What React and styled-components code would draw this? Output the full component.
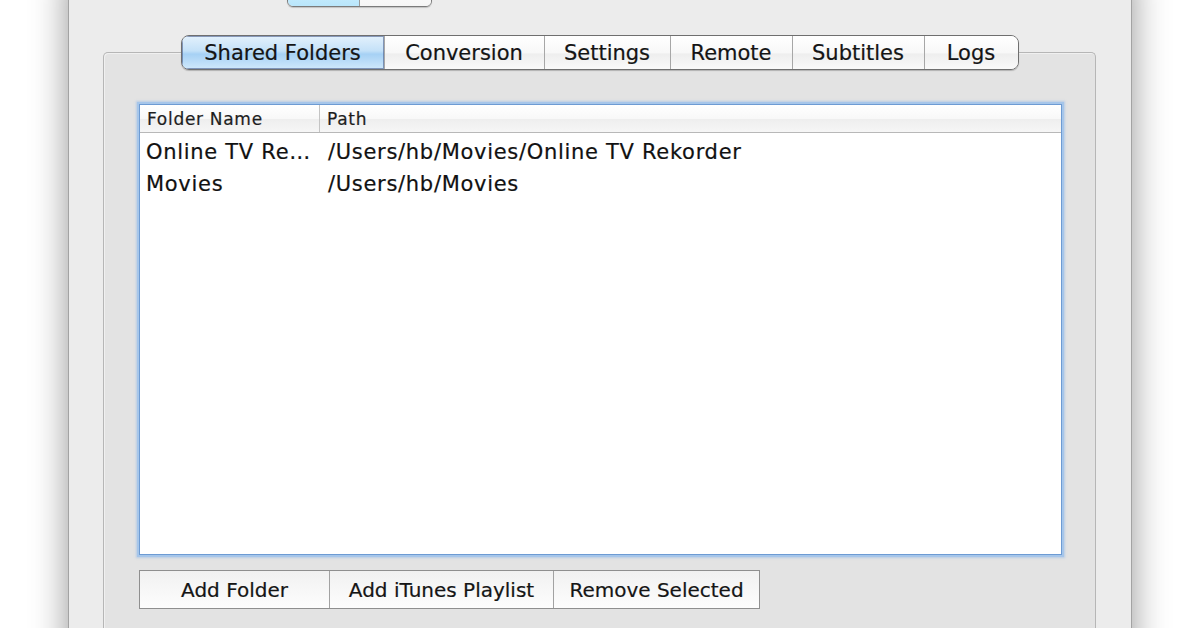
import React from "react";
import styled, { createGlobalStyle } from "styled-components";

const GlobalStyle = createGlobalStyle`
  html, body {
    margin: 0;
    padding: 0;
    background: #ffffff;
    overflow: hidden;
  }
  body {
    font-family: "DejaVu Sans", "Liberation Sans", sans-serif;
    color: #151515;
    -webkit-text-stroke: 0.2px currentColor;
  }
`;

const tabs = [
  { label: "Shared Folders", w: 202 },
  { label: "Conversion", w: 160 },
  { label: "Settings", w: 126 },
  { label: "Remote", w: 122 },
  { label: "Subtitles", w: 132 },
  { label: "Logs", w: 94 },
];

const folders = [
  { name: "Online TV Re\u2026", path: "/Users/hb/Movies/Online TV Rekorder" },
  { name: "Movies", path: "/Users/hb/Movies" },
];

const actions = [
  { label: "Add Folder", w: 189 },
  { label: "Add iTunes Playlist", w: 224 },
  { label: "Remove Selected", w: 206 },
];

const Page = styled.div`
  height: 628px;
  display: flex;
  justify-content: center;
  overflow: hidden;
`;

const Window = styled.div`
  box-sizing: border-box;
  width: 1064px;
  height: 720px;
  margin-top: -30px;
  background: #ececec;
  border-left: 1px solid #a3a3a3;
  border-right: 1px solid #a3a3a3;
  box-shadow: 0 0 34px rgba(0, 0, 0, 0.42);
  display: flex;
  flex-direction: column;
`;

const TopRow = styled.div`
  box-sizing: border-box;
  height: 37px;
  display: flex;
  align-items: flex-end;
  padding: 10px 0 0 12px;
`;

const TopLabel = styled.span`
  align-self: flex-start;
  width: 200px;
  margin: -4px 6px 0 0;
  line-height: 23px;
  text-align: right;
  font-size: 20px;
  color: #222;
`;

const Segmented = styled.div`
  display: flex;
  height: 27px;
  border: 1px solid #7b7b7b;
  border-radius: 6px;
  overflow: hidden;
  box-sizing: border-box;
  box-shadow: 0 1px 1px rgba(0, 0, 0, 0.18);
`;

const Segment = styled.div`
  width: ${(p) => p.$w}px;
  background: ${(p) =>
    p.$on ? "linear-gradient(#d6f2fe, #b9e6fb)" : "linear-gradient(#ffffff, #f6f6f6)"};
  & + & {
    border-left: 1px solid #9a9a9a;
  }
`;

const GroupWrap = styled.div`
  margin: 28px 35px 0 34px;
  display: flex;
  flex-direction: column;
`;

const TabBar = styled.div`
  display: flex;
  justify-content: center;
  position: relative;
  z-index: 1;
`;

const TabStrip = styled.div`
  display: flex;
  height: 35px;
  box-sizing: border-box;
  border: 1px solid #6f6f6f;
  border-radius: 8px;
  overflow: hidden;
  box-shadow: 0 1px 1px rgba(0, 0, 0, 0.22);
`;

const Tab = styled.div`
  box-sizing: border-box;
  width: ${(p) => p.$w}px;
  display: flex;
  align-items: center;
  justify-content: center;
  font-size: 21px;
  color: #141414;
  background: ${(p) =>
    p.$active
      ? "linear-gradient(#e3f1fc 0%, #c4e1f8 45%, #a6d1f4 55%, #cfe8fb 100%)"
      : "linear-gradient(#ffffff 0%, #f8f8f8 50%, #eeeeee 55%, #fafafa 100%)"};
  box-shadow: ${(p) => (p.$active ? "inset 0 0 0 1px rgba(60, 80, 130, 0.55)" : "none")};
  & + & {
    border-left: 1px solid #a7a7a7;
  }
`;

const GroupBox = styled.div`
  margin-top: -18px;
  height: 640px;
  background: #e3e3e3;
  border: 1px solid #b6b6b6;
  border-bottom: none;
  border-radius: 5px 5px 0 0;
  padding: 51px 33px 0 35px;
  box-shadow: inset 1px 1px 0 #f0f0f0;
`;

const Table = styled.div`
  height: 451px;
  box-sizing: border-box;
  background: #ffffff;
  border: 1px solid #6d9bd3;
  box-shadow: 0 0 0 2px #a6c6ea, 0 0 2px 3px rgba(150, 185, 230, 0.55);
  display: flex;
  flex-direction: column;
`;

const HeaderRow = styled.div`
  display: grid;
  grid-template-columns: 180px 1fr;
  height: 27px;
  border-bottom: 1px solid #b8b8b8;
  background: linear-gradient(#ffffff 0%, #f8f8f8 50%, #eeeeee 52%, #f6f6f6 100%);
`;

const HeaderCell = styled.div`
  display: flex;
  align-items: center;
  padding-left: 7px;
  font-size: 17px;
  letter-spacing: 0.7px;
  color: #1e1e1e;
  border-right: ${(p) => (p.$last ? "none" : "1px solid #c4c4c4")};
`;

const Body = styled.div`
  padding-top: 3px;
`;

const Row = styled.div`
  display: grid;
  grid-template-columns: 181px 1fr;
  height: 32px;
  align-items: center;
  font-size: 21px;
  letter-spacing: 0.7px;
  color: #111;
`;

const Cell = styled.div`
  padding-left: ${(p) => (p.$first ? 6 : 7)}px;
  white-space: nowrap;
  overflow: hidden;
`;

const ButtonGroup = styled.div`
  display: flex;
  margin-top: 15px;
`;

const ButtonStrip = styled.div`
  display: flex;
  height: 39px;
  box-sizing: border-box;
  border: 1px solid #8f8f8f;
`;

const ActionButton = styled.div`
  box-sizing: border-box;
  width: ${(p) => p.$w}px;
  display: flex;
  align-items: center;
  justify-content: center;
  font-size: 20px;
  color: #151515;
  background: linear-gradient(#f1f1f1, #fdfdfd);
  & + & {
    border-left: 1px solid #a2a2a2;
  }
`;

function App() {
  return (
    <Page>
      <GlobalStyle />
      <Window>
        <TopRow>
          <TopLabel>Language:</TopLabel>
          <Segmented>
            <Segment $w={71} $on />
            <Segment $w={71} />
          </Segmented>
        </TopRow>

        <GroupWrap>
          <TabBar>
            <TabStrip>
              {tabs.map((t, i) => (
                <Tab key={t.label} $w={t.w} $active={i === 0}>
                  {t.label}
                </Tab>
              ))}
            </TabStrip>
          </TabBar>

          <GroupBox>
            <Table>
              <HeaderRow>
                <HeaderCell>Folder Name</HeaderCell>
                <HeaderCell $last>Path</HeaderCell>
              </HeaderRow>
              <Body>
                {folders.map((f) => (
                  <Row key={f.path}>
                    <Cell $first>{f.name}</Cell>
                    <Cell>{f.path}</Cell>
                  </Row>
                ))}
              </Body>
            </Table>

            <ButtonGroup>
              <ButtonStrip>
                {actions.map((a) => (
                  <ActionButton key={a.label} $w={a.w}>
                    {a.label}
                  </ActionButton>
                ))}
              </ButtonStrip>
            </ButtonGroup>
          </GroupBox>
        </GroupWrap>
      </Window>
    </Page>
  );
}

export default App;
